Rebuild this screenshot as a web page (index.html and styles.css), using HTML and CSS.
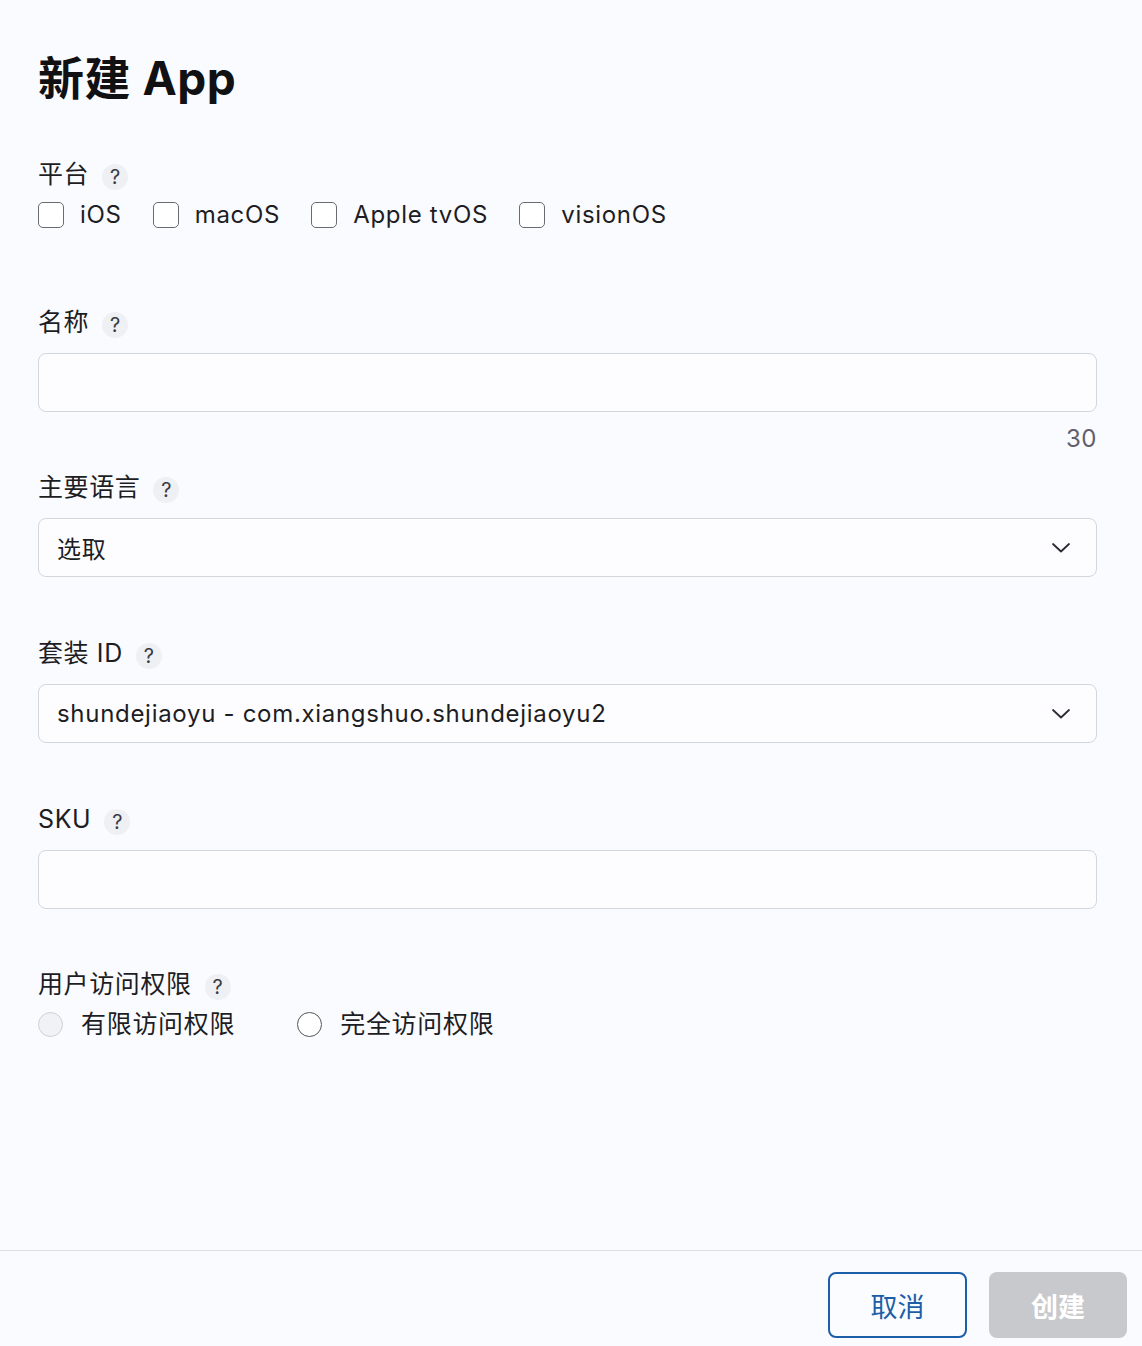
FILE: index.html
```html
<!DOCTYPE html>
<html>

<head>
    <meta charset="UTF-8">
    <title>新建 App</title>
    <link rel="stylesheet" href="styles.css">
</head>

<body>
    <div class="dialog">
        <div class="content">
            <h1 class="title">新建 App</h1>

            <div class="field field-platform">
                <div class="label">平台 <span class="help">?</span></div>
                <div class="options">
                    <label class="check"><span class="box"></span>iOS</label>
                    <label class="check"><span class="box"></span>macOS</label>
                    <label class="check"><span class="box"></span>Apple tvOS</label>
                    <label class="check"><span class="box"></span>visionOS</label>
                </div>
            </div>

            <div class="field field-name">
                <div class="label">名称 <span class="help">?</span></div>
                <div class="input"></div>
                <div class="count">30</div>
            </div>

            <div class="field field-lang">
                <div class="label">主要语言 <span class="help">?</span></div>
                <div class="input select">
                    <span>选取</span>
                    <svg class="chev" width="20" height="12" viewBox="0 0 20 12"><path d="M2 2 L10 9.5 L18 2" fill="none" stroke="#2a2a33" stroke-width="1.8" stroke-linecap="round" stroke-linejoin="round"/></svg>
                </div>
            </div>

            <div class="field field-bundle">
                <div class="label">套装 ID <span class="help">?</span></div>
                <div class="input select">
                    <span>shundejiaoyu - com.xiangshuo.shundejiaoyu2</span>
                    <svg class="chev" width="20" height="12" viewBox="0 0 20 12"><path d="M2 2 L10 9.5 L18 2" fill="none" stroke="#2a2a33" stroke-width="1.8" stroke-linecap="round" stroke-linejoin="round"/></svg>
                </div>
            </div>

            <div class="field field-sku">
                <div class="label">SKU <span class="help">?</span></div>
                <div class="input"></div>
            </div>

            <div class="field field-access">
                <div class="label">用户访问权限 <span class="help">?</span></div>
                <div class="options radios">
                    <label class="radio"><span class="dot disabled"></span>有限访问权限</label>
                    <label class="radio"><span class="dot"></span>完全访问权限</label>
                </div>
            </div>
        </div>

        <div class="footer">
            <button class="btn btn-cancel">取消</button>
            <button class="btn btn-create">创建</button>
        </div>
    </div>
</body>

</html>
```

FILE: styles.css
```css
* {
    margin: 0;
    padding: 0;
    box-sizing: border-box;
}

body {
    background: #fafbfe;
    font-family: Inter, "Noto Sans CJK SC", sans-serif;
    color: #1d1d24;
}

.dialog {
    height: 1346px;
    display: flex;
    flex-direction: column;
}

.content {
    flex: 1;
    padding: 50px 45px 0 38px;
}

.title {
    font-size: 46px;
    font-weight: 700;
    line-height: 56px;
    color: #111114;
    letter-spacing: 0.5px;
}

.label {
    display: flex;
    align-items: center;
    font-size: 25px;
    letter-spacing: 0.6px;
    line-height: 30px;
    height: 30px;
}

.help {
    width: 26px;
    height: 26px;
    margin-left: 13px;
    border-radius: 50%;
    background: #eef0f4;
    font-size: 20px;
    line-height: 26px;
    letter-spacing: 0;
    text-align: center;
    color: #3a3a44;
    margin-top: 6px;
}

.options {
    display: flex;
    gap: 31px;
    margin-top: 11px;
    font-size: 24px;
    letter-spacing: 0.7px;
    line-height: 30px;
}

.check,
.radio {
    display: flex;
    align-items: center;
}

.box {
    width: 26px;
    height: 26px;
    border: 1.5px solid #6a6a72;
    border-radius: 5px;
    background: #fff;
    margin-right: 16px;
}

.field-platform {
    margin-top: 53px;
}

.field-name {
    margin-top: 77px;
}

.field-lang {
    margin-top: 19px;
}

.field-bundle {
    margin-top: 61px;
}

.field-sku {
    margin-top: 61px;
}

.field-access {
    margin-top: 60px;
}

.input {
    height: 59px;
    margin-top: 16px;
    border: 1px solid #d3d6dd;
    border-radius: 8px;
    background: #fdfdff;
}

.select {
    display: flex;
    align-items: center;
    justify-content: space-between;
    padding: 0 25px 0 18px;
    font-size: 24px;
    letter-spacing: 0.7px;
}

.count {
    text-align: right;
    font-size: 24px;
    line-height: 28px;
    margin-top: 13px;
    color: #5f5f6e;
    letter-spacing: 0.5px;
}

.radios {
    gap: 62px;
    margin-top: 10px;
    font-size: 25px;
}

.dot {
    width: 25px;
    height: 25px;
    border-radius: 50%;
    border: 1.5px solid #55555d;
    background: #fff;
    margin-right: 18px;
}

.dot.disabled {
    border-color: #cfd0d5;
    background: #f1f2f5;
}

.footer {
    height: 96px;
    border-top: 1px solid #dcdfe5;
    display: flex;
    justify-content: flex-end;
    align-items: flex-start;
    gap: 22px;
    padding: 21px 15px 0 0;
}

.btn {
    height: 66px;
    border-radius: 8px;
    font-family: "Noto Sans CJK SC", sans-serif;
    font-size: 27px;
}

.btn-cancel {
    width: 139px;
    border: 2px solid #1d5ea8;
    background: #fbfcff;
    color: #1d5ea8;
}

.btn-create {
    width: 138px;
    border: none;
    background: #c8c9cd;
    color: #fff;
    font-weight: 700;
}
```
